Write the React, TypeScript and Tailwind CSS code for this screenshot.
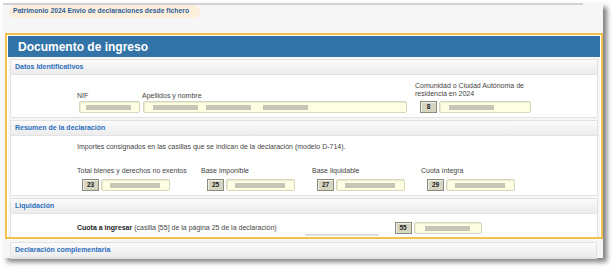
const font = { fontFamily: '"Liberation Sans", Arial, sans-serif' };

function Masked({ width, bars }: { width: number; bars: [number, number][] }) {
  // blurred personal data inside a yellow input
  return (
    <div
      className="relative h-[12px] shrink-0 rounded-[2px] border border-[#d6d6bf] bg-[#fefee2] shadow-[inset_1px_1px_1px_rgba(0,0,0,0.08)]"
      style={{ width }}
    >
      {bars.map(([left, w], i) => (
        <div
          key={i}
          className="absolute top-[3px] h-[5px] bg-[#c6c6b6] blur-[0.4px]"
          style={{ left, width: w }}
        />
      ))}
    </div>
  );
}

function Casilla({ n }: { n: string }) {
  return (
    <div className="flex h-[12px] w-[17px] shrink-0 items-center justify-center border border-[#8c8c7c] bg-[#d5d5c2] text-[6.5px] font-bold text-[#222] shadow-[inset_1px_1px_0_rgba(255,255,255,0.6)]">
      {n}
    </div>
  );
}

function SectionHeader({ title }: { title: string }) {
  return (
    <div className="flex h-[15px] items-center border-b border-[#e3e3e3] bg-gradient-to-b from-[#fbfbfb] to-[#ececec] pl-[4px] text-[7px] font-bold text-[#2d6fbd]">
      {title}
    </div>
  );
}

function Importe({ label, n, width, boxLeft }: { label: string; n: string; width: number; boxLeft: number }) {
  return (
    <div className="flex shrink-0 flex-col" style={{ width }}>
      <div className="mb-[4px] text-[7px] leading-[8px] text-[#444]">{label}</div>
      <div className="flex gap-[2px]" style={{ marginLeft: boxLeft }}>
        <Casilla n={n} />
        <Masked width={69} bars={[[8, 50]]} />
      </div>
    </div>
  );
}

export default function App() {
  return (
    <div className="h-[270px] w-[613px] bg-white pl-[3px] pt-[3px]" style={font}>
      <div className="h-[255px] w-[600px] bg-[#f6f6f6] shadow-[4px_4px_5px_rgba(0,0,0,0.5)]">
        <div className="h-[2px] w-[580px] bg-[#d2d2d2]" />
        <div className="ml-[6px] flex h-[13px] w-[191px] items-center rounded-full bg-[#fcefdc] pl-[4px] text-[6.8px] font-bold text-[#2f5f99]">
          Patrimonio 2024 Envio de declaraciones desde fichero
        </div>

        <div className="ml-[2px] mt-[15px] h-[206px] w-[598px] overflow-hidden border-2 border-[#f2c24e] bg-white p-[1px]">
          <div className="flex h-[21px] items-center bg-[#3273a8] pl-[10px] text-[12px] font-bold text-white">
            Documento de ingreso
          </div>

          <div className="flex flex-col gap-[2px] bg-[#f6f6f6] px-[2px] pt-[2px]">
            <div className="border border-[#e2e2e2] bg-white">
              <SectionHeader title="Datos Identificativos" />
              <div className="flex h-[42px] items-end pb-[4px] pl-[66px]">
                <div className="flex w-[65px] flex-col">
                  <div className="mb-[1px] text-[7px] leading-[8px] text-[#444]">NIF</div>
                  <div className="ml-[2px]">
                    <Masked width={61} bars={[[6, 45]]} />
                  </div>
                </div>
                <div className="flex w-[273px] flex-col">
                  <div className="mb-[1px] text-[7px] leading-[8px] text-[#444]">Apellidos y nombre</div>
                  <div className="ml-[1px]">
                    <Masked width={264} bars={[[9, 45], [62, 45], [119, 45]]} />
                  </div>
                </div>
                <div className="flex flex-col">
                  <div className="mb-[3px] text-[7px] leading-[8px] text-[#444]">
                    Comunidad o Ciudad Autónoma de
                    <br />
                    residencia en 2024
                  </div>
                  <div className="ml-[5px] flex gap-[2px]">
                    <Casilla n="8" />
                    <Masked width={92} bars={[[9, 45]]} />
                  </div>
                </div>
              </div>
            </div>

            <div className="border border-[#e2e2e2] bg-white">
              <SectionHeader title="Resumen de la declaración" />
              <div className="flex h-[59px] flex-col pl-[66px] pt-[7px]">
                <div className="text-[7px] leading-[8px] text-[#444]">
                  Importes consignados en las casillas que se indican de la declaración (modelo D-714).
                </div>
                <div className="mt-[16px] flex">
                  <Importe label="Total bienes y derechos no exentos" n="23" width={124} boxLeft={5} />
                  <Importe label="Base imponible" n="25" width={111} boxLeft={6} />
                  <Importe label="Base liquidable" n="27" width={109} boxLeft={5} />
                  <Importe label="Cuota íntegra" n="29" width={100} boxLeft={6} />
                </div>
              </div>
            </div>

            <div className="border border-[#e2e2e2] bg-white">
              <SectionHeader title="Liquidación" />
              <div className="flex h-[30px] items-start pl-[66px] pt-[8px]">
                <div className="mt-[2px] text-[7px] leading-[8px] text-[#444]">
                  <span className="font-bold text-[#222]">Cuota a ingresar</span> (casilla [55] de la página 25 de la declaración)
                </div>
                <div className="ml-[28px] mt-[12px] h-[2px] w-[74px] bg-[#dedede]" />
                <div className="ml-[16px] flex gap-[2px]">
                  <Casilla n="55" />
                  <Masked width={68} bars={[[10, 45]]} />
                </div>
              </div>
            </div>
          </div>
        </div>

        <div className="ml-[7px] mt-[3px] w-[587px] border border-[#e2e2e2] bg-white">
          <SectionHeader title="Declaración complementaria" />
        </div>
      </div>
    </div>
  );
}
